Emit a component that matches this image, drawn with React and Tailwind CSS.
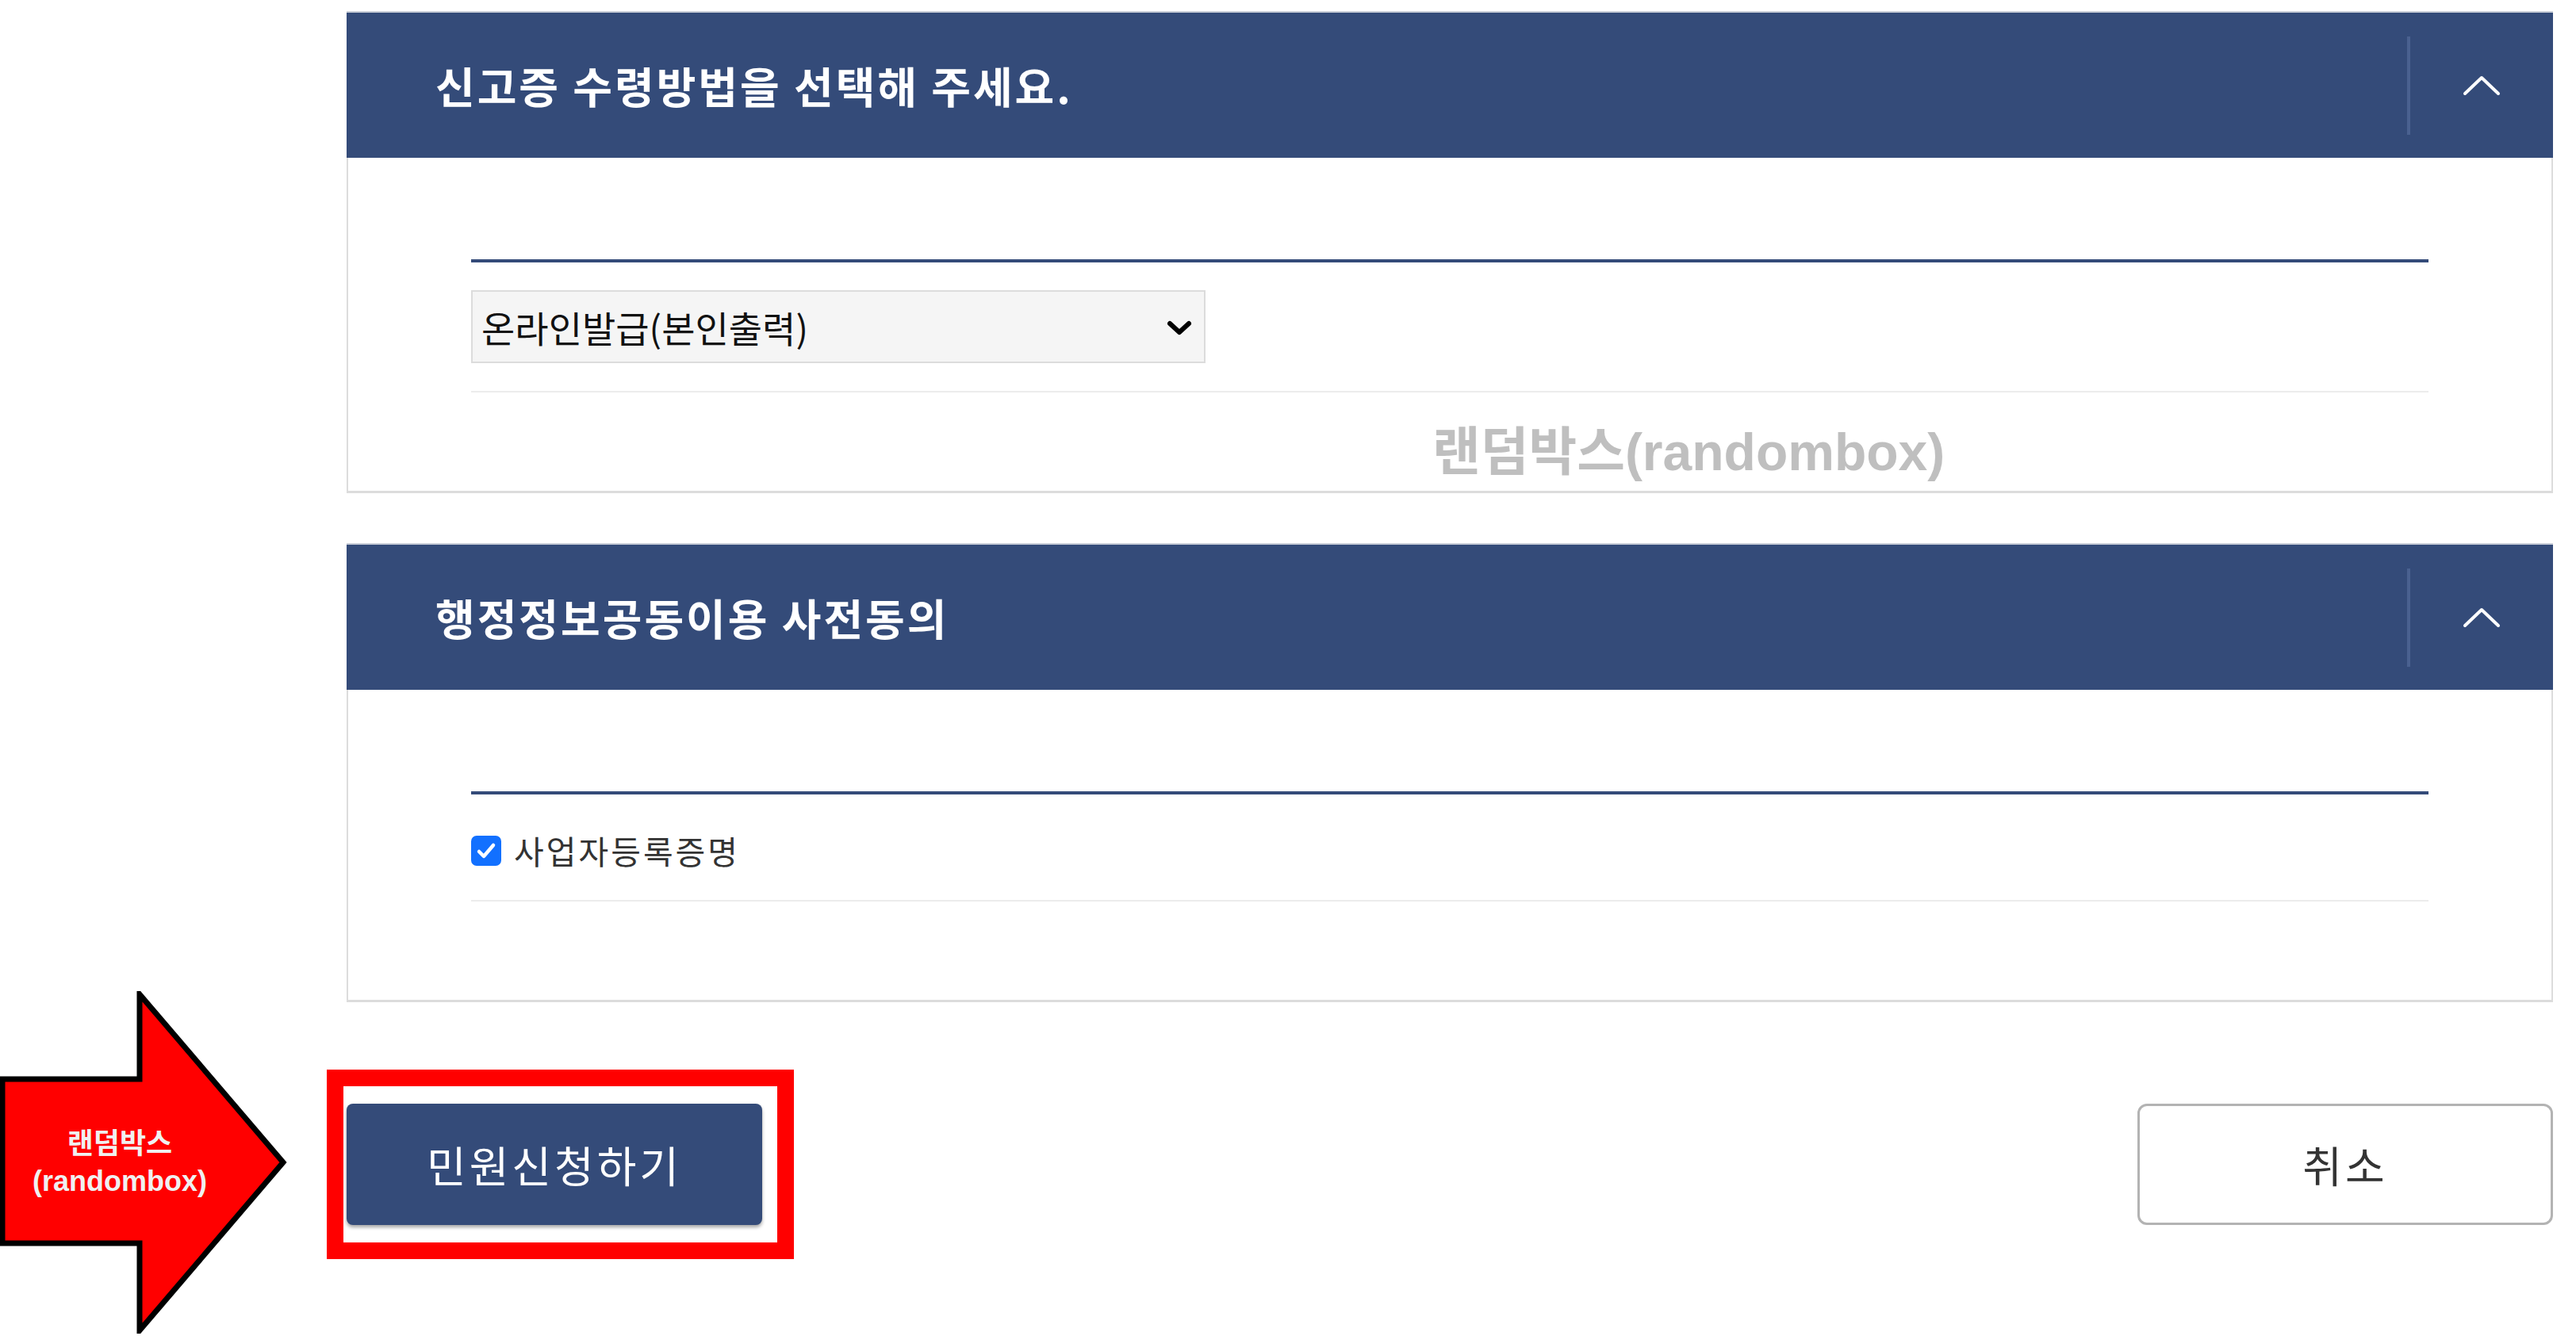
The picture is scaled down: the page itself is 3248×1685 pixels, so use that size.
import React from 'react';

const kr = { fontFamily: '"Noto Sans CJK KR", "Noto Sans", sans-serif' };
const mark = { fontFamily: '"Liberation Sans", "Noto Sans CJK KR", sans-serif' };

const ChevronUp = () => (
  <svg width="48" height="26" viewBox="0 0 48 26" fill="none">
    <polyline points="3,23 24,3 45,23" stroke="#ffffff" strokeWidth="4" strokeLinecap="round" strokeLinejoin="round" />
  </svg>
);

const PanelHeader = ({ title }) => (
  <div className="flex h-[185px] items-center bg-[#344b79] border-t-2 border-[#c9ced8]">
    <h2 className="flex-1 pl-[112px] text-[54px] font-bold text-white leading-none tracking-[3px]" style={kr}>
      {title}
    </h2>
    <div className="flex h-[124px] w-[184px] items-center justify-center border-l-[4px] border-[#4a6190]">
      <ChevronUp />
    </div>
  </div>
);

const Panel = ({ title, children, watermark }) => (
  <section className="flex flex-col">
    <PanelHeader title={title} />
    <div className="relative border-x-2 border-b-[3px] border-[#dcdcdc] px-[155px] pt-[128px] pb-[124px]">
      <div className="border-t-[4px] border-[#344b79]" />
      {children}
      {watermark && (
        <div className="absolute left-[1367px] top-[338px] text-[66px] font-bold leading-none text-[#bfbfbf]" style={mark}>
          랜덤박스(randombox)
        </div>
      )}
    </div>
  </section>
);

const Arrow = () => (
  <svg className="absolute left-0 top-[1250px]" width="365" height="432" viewBox="0 0 365 432">
    <polygon
      points="3,111 176,111 176,4 357,216 176,428 176,318 3,318"
      fill="#ff0000"
      stroke="#000000"
      strokeWidth="7"
      strokeLinejoin="miter"
    />
  </svg>
);

export default function App() {
  return (
    <div className="relative h-[1685px] w-[3248px] overflow-hidden bg-white">
      <div className="ml-[437px] w-[2782px] pt-[14px]">
        <Panel title="신고증 수령방법을 선택해 주세요." watermark>
          <div className="border-b-2 border-[#ececec] py-[35px]">
            <div className="relative w-[926px]">
              <select
                className="h-[92px] w-full appearance-none border-2 border-[#dcdcdc] bg-[#f5f5f5] pl-[11px] text-[46px] text-[#111] outline-none"
                style={kr}
                defaultValue="online"
              >
                <option value="online">온라인발급(본인출력)</option>
              </select>
              <svg className="pointer-events-none absolute right-[16px] top-[37px]" width="34" height="22" viewBox="0 0 34 22" fill="none">
                <polyline points="5,5 17,16 29,5" stroke="#000" strokeWidth="6" strokeLinecap="round" strokeLinejoin="round" />
              </svg>
            </div>
          </div>
        </Panel>

        <div className="mt-[63px]">
          <Panel title="행정정보공동이용 사전동의">
            <div className="flex h-[135px] items-center gap-[16px] border-b-2 border-[#ececec] pt-[8px]">
              <span className="flex h-[38px] w-[38px] items-center justify-center rounded-[7px] bg-[#1270ff]">
                <svg width="26" height="22" viewBox="0 0 26 22" fill="none">
                  <polyline points="4,12 10,18 22,4" stroke="#fff" strokeWidth="4.5" strokeLinecap="round" strokeLinejoin="round" />
                </svg>
              </span>
              <span className="text-[41px] leading-none text-[#333] tracking-[3px]" style={kr}>
                사업자등록증명
              </span>
            </div>
          </Panel>
        </div>

        <div className="mt-[128px] flex items-start justify-between">
          <div className="relative">
            <button
              className="h-[153px] w-[524px] rounded-[8px] bg-[#344b79] text-[54px] text-white tracking-[4px] shadow-[0_3px_4px_rgba(0,0,0,0.35)]"
              style={kr}
            >
              민원신청하기
            </button>
            <div className="pointer-events-none absolute -left-[25px] -right-[40px] -top-[43px] -bottom-[43px] border-[21px] border-[#ff0000]" />
          </div>
          <button
            className="h-[153px] w-[524px] rounded-[12px] border-[3px] border-[#b3b3b3] bg-white text-[54px] text-[#333] tracking-[4px]"
            style={kr}
          >
            취소
          </button>
        </div>
      </div>

      <Arrow />
      <div
        className="absolute left-[0px] top-[1419px] w-[302px] text-center text-[36px] font-bold leading-[47px] text-[#f0f0f0]"
        style={mark}
      >
        랜덤박스
        <br />
        (randombox)
      </div>
    </div>
  );
}
